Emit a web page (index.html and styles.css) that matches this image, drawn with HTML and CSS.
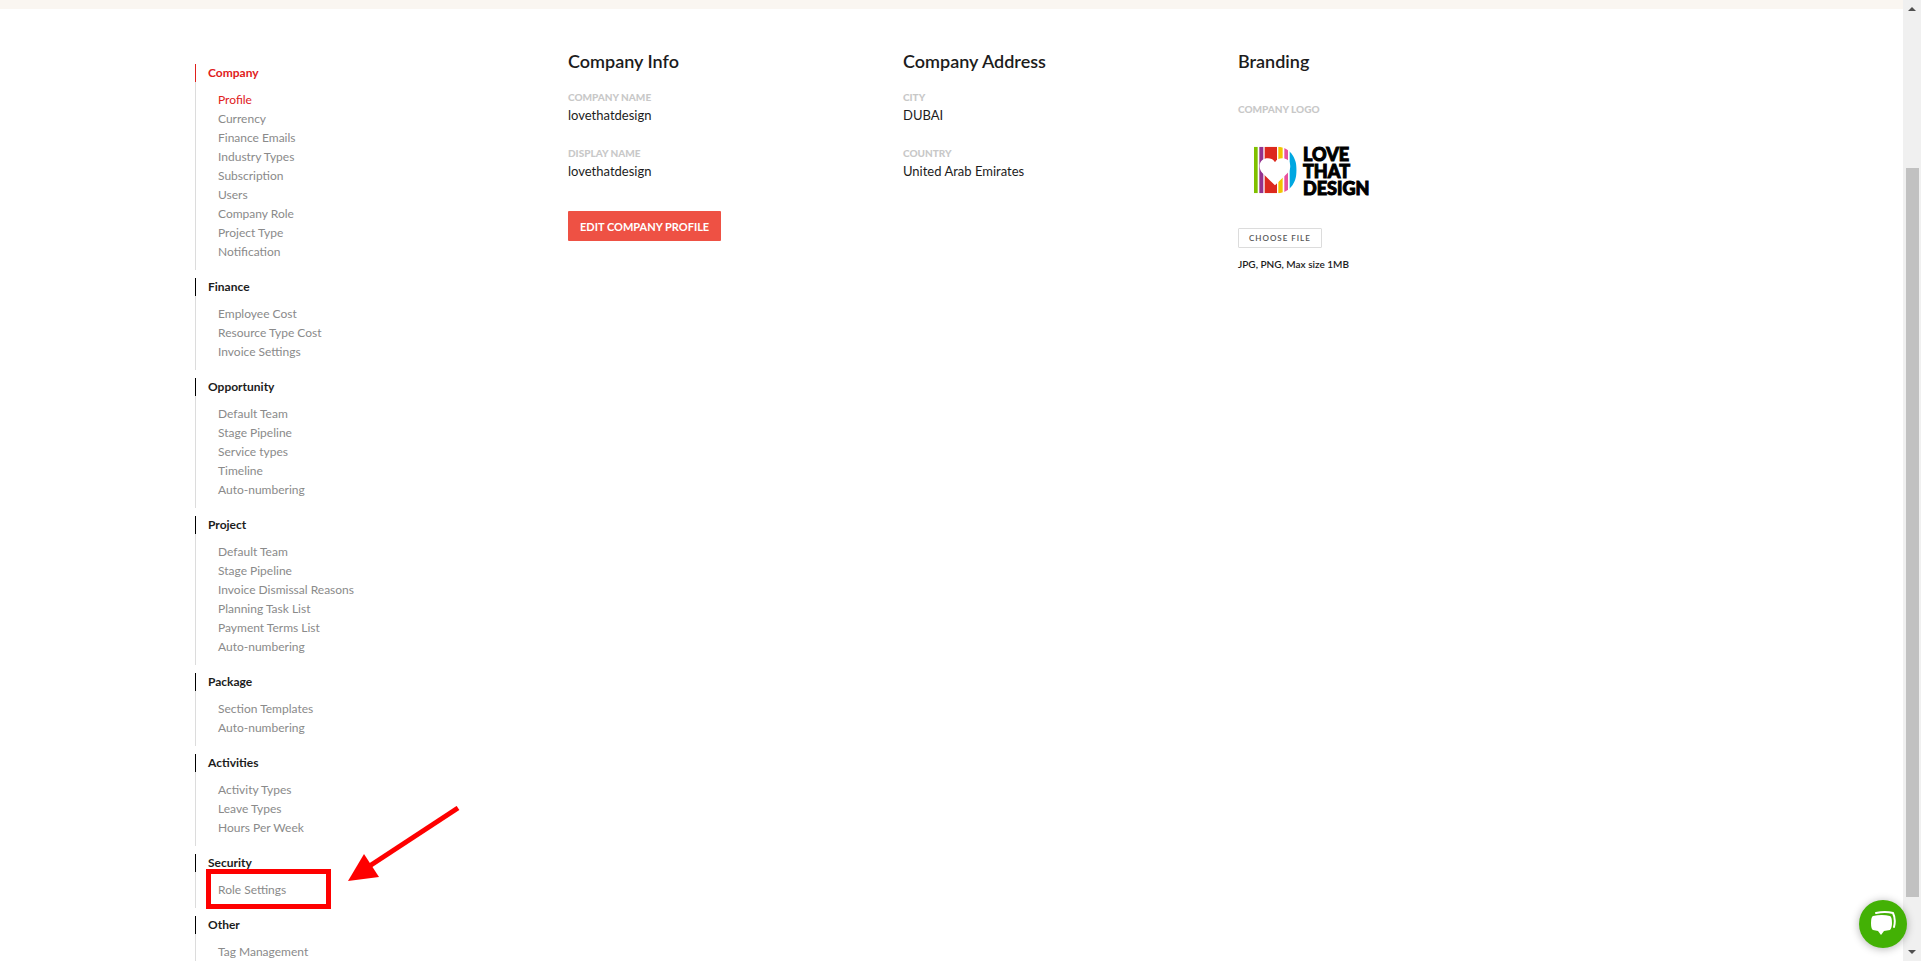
FILE: index.html
```html
<!DOCTYPE html>
<html lang="en">
<head>
  <meta charset="UTF-8">
  <meta name="viewport" content="width=device-width, initial-scale=1.0">
  <title>Company Profile - Settings</title>
  <link rel="stylesheet" href="styles.css">
</head>
<body>
  <div class="page">
    <div class="top-strip"></div>
    <div class="container">
      <nav class="sidebar">
        <section class="group active">
          <h2>Company</h2>
          <ul>
            <li><a class="current" href="#">Profile</a></li>
            <li><a href="#">Currency</a></li>
            <li><a href="#">Finance Emails</a></li>
            <li><a href="#">Industry Types</a></li>
            <li><a href="#">Subscription</a></li>
            <li><a href="#">Users</a></li>
            <li><a href="#">Company Role</a></li>
            <li><a href="#">Project Type</a></li>
            <li><a href="#">Notification</a></li>
          </ul>
        </section>
        <section class="group">
          <h2>Finance</h2>
          <ul>
            <li><a href="#">Employee Cost</a></li>
            <li><a href="#">Resource Type Cost</a></li>
            <li><a href="#">Invoice Settings</a></li>
          </ul>
        </section>
        <section class="group">
          <h2>Opportunity</h2>
          <ul>
            <li><a href="#">Default Team</a></li>
            <li><a href="#">Stage Pipeline</a></li>
            <li><a href="#">Service types</a></li>
            <li><a href="#">Timeline</a></li>
            <li><a href="#">Auto-numbering</a></li>
          </ul>
        </section>
        <section class="group">
          <h2>Project</h2>
          <ul>
            <li><a href="#">Default Team</a></li>
            <li><a href="#">Stage Pipeline</a></li>
            <li><a href="#">Invoice Dismissal Reasons</a></li>
            <li><a href="#">Planning Task List</a></li>
            <li><a href="#">Payment Terms List</a></li>
            <li><a href="#">Auto-numbering</a></li>
          </ul>
        </section>
        <section class="group">
          <h2>Package</h2>
          <ul>
            <li><a href="#">Section Templates</a></li>
            <li><a href="#">Auto-numbering</a></li>
          </ul>
        </section>
        <section class="group">
          <h2>Activities</h2>
          <ul>
            <li><a href="#">Activity Types</a></li>
            <li><a href="#">Leave Types</a></li>
            <li><a href="#">Hours Per Week</a></li>
          </ul>
        </section>
        <section class="group">
          <h2>Security</h2>
          <ul>
            <li class="marked">
              <a href="#">Role Settings</a>
              <span class="mark-box"></span>
              <svg class="mark-arrow" width="112" height="76" viewBox="0 0 112 76">
                <path d="M110 2 L20 61" stroke="#fe0000" stroke-width="5" fill="none"/>
                <path d="M0 75 L16 48 L31 71 Z" fill="#fe0000"/>
              </svg>
            </li>
          </ul>
        </section>
        <section class="group">
          <h2>Other</h2>
          <ul>
            <li><a href="#">Tag Management</a></li>
          </ul>
        </section>
      </nav>

      <main class="content">
        <section class="column">
          <h1>Company Info</h1>
          <dl>
            <dt>COMPANY NAME</dt>
            <dd>lovethatdesign</dd>
            <dt>DISPLAY NAME</dt>
            <dd>lovethatdesign</dd>
          </dl>
          <button class="btn-edit" type="button">EDIT COMPANY PROFILE</button>
        </section>
        <section class="column">
          <h1>Company Address</h1>
          <dl>
            <dt>CITY</dt>
            <dd>DUBAI</dd>
            <dt>COUNTRY</dt>
            <dd>United Arab Emirates</dd>
          </dl>
        </section>
        <section class="column">
          <h1>Branding</h1>
          <p class="logo-label">COMPANY LOGO</p>
          <div class="logo">
            <svg width="44" height="48" viewBox="0 0 132 144">
              <defs>
                <clipPath id="d-shape">
                  <path d="M0 2 H68 C106 2 128 33 128 72 C128 111 106 142 68 142 H0 Z"/>
                </clipPath>
              </defs>
              <g clip-path="url(#d-shape)">
                <rect x="0" y="0" width="11" height="144" fill="#80c000"/>
                <rect x="16" y="0" width="12" height="144" fill="#93328e"/>
                <rect x="32" y="0" width="37" height="144" fill="#dc291e"/>
                <rect x="73" y="0" width="13" height="144" fill="#f2c500"/>
                <rect x="91" y="0" width="11" height="144" fill="#e8509e"/>
                <rect x="107" y="0" width="25" height="144" fill="#00a7e1"/>
              </g>
              <path d="M63 49 C57 35 36 33 25 42 C13 52 15 71 26 82 L63 118 L100 82 C111 71 112 52 101 42 C90 33 69 35 63 49 Z" fill="#fff"/>
            </svg>
            <div class="logo-text">LOVE<br>THAT<br>DESIGN</div>
          </div>
          <button class="btn-file" type="button">CHOOSE FILE</button>
          <p class="hint">JPG, PNG, Max size 1MB</p>
        </section>
      </main>
    </div>
  </div>

  <div class="scrollbar">
    <span class="arrow-up"></span>
    <span class="track"><span class="thumb"></span></span>
    <span class="arrow-down"></span>
  </div>

  <button class="chat" type="button" aria-label="Chat">
    <svg width="26" height="26" viewBox="0 0 26 26">
      <path d="M6 2 Q15 0 23 2 Q26 8 24 16" stroke="#fff" stroke-width="2" fill="none" stroke-linecap="round"/>
      <path d="M3 5 Q12 3 20 5 Q22 6 22 12 Q22 17 20 19 L14 20 L11 24 L8 20 L3 19 Q1 18 1 12 Q1 6 3 5 Z" fill="#fff"/>
    </svg>
  </button>
</body>
</html>
```

FILE: styles.css
```css
* {
  box-sizing: border-box;
}
body {
  margin: 0;
  font-family: Lato, "Liberation Sans", sans-serif;
  background: #fff;
  color: #1c1c1c;
  height: 100vh;
  overflow: hidden;
  display: flex;
}
h1, h2, p, ul, dl, dd {
  margin: 0;
  padding: 0;
}
button {
  font-family: inherit;
  cursor: pointer;
}
.page {
  flex: 1;
  min-width: 0;
  overflow: hidden;
}
.top-strip {
  height: 9px;
  background: #faf6f1;
}
.container {
  display: flex;
  padding: 0 0 0 195px;
}

/* settings menu */
.sidebar {
  width: 373px;
  flex-shrink: 0;
  padding-top: 55px;
}
.group {
  margin-bottom: 8px;
  border-left: 1px solid #dcdcdc;
}
.group h2 {
  margin-left: -1px;
  padding-left: 12px;
  border-left: 1px solid #000;
  font-size: 12px;
  line-height: 18px;
  font-weight: 700;
}
.group.active h2 {
  border-color: #e0201b;
  color: #e0201b;
}
.group ul {
  list-style: none;
  padding: 8px 0 9px 22px;
}
.group li {
  font-size: 12px;
  line-height: 19px;
}
.group a {
  color: #8a8a8a;
  text-decoration: none;
}
.group a.current {
  color: #e0201b;
}
.marked {
  position: relative;
}
.mark-box {
  position: absolute;
  left: -12px;
  top: -11px;
  width: 125px;
  height: 40px;
  border: 5px solid #fe0000;
}
.mark-arrow {
  position: absolute;
  left: 130px;
  top: -74px;
}

/* company details */
.content {
  flex: 1;
  display: grid;
  grid-template-columns: repeat(3, minmax(0, 335px));
  padding-top: 40px;
}
.column h1 {
  font-size: 18px;
  line-height: 24px;
  font-weight: 600;
  margin-bottom: 16px;
}
dt, .logo-label {
  font-size: 10px;
  line-height: 16px;
  font-weight: 900;
  color: #c8c8c8;
}
dd {
  font-size: 13px;
  line-height: 20px;
  margin-bottom: 20px;
}
.btn-edit {
  margin-top: 10px;
  height: 30px;
  padding: 0 12px;
  border: 0;
  border-radius: 1px;
  background: #ee5144;
  color: #fff;
  font-size: 11px;
  font-weight: 700;
}
.logo-label {
  margin-top: 28px;
}
.logo {
  display: flex;
  gap: 5px;
  margin: 29px 0 31px 16px;
}
.logo-text {
  font-size: 18px;
  line-height: 17px;
  font-weight: 900;
  color: #000;
  -webkit-text-stroke: 1px #000;
}
.btn-file {
  display: block;
  height: 20px;
  padding: 0 10px;
  border: 1px solid #dcdcdc;
  border-radius: 1px;
  background: #fff;
  color: #555;
  font-size: 8px;
  font-weight: 600;
  letter-spacing: 1px;
}
.hint {
  margin-top: 8px;
  font-size: 10px;
  line-height: 16px;
  font-weight: 600;
}

/* window scrollbar */
.scrollbar {
  width: 18px;
  background: #f0f0f0;
  display: flex;
  flex-direction: column;
  align-items: center;
  padding: 7px 0 2px;
}
.arrow-up, .arrow-down {
  border: 4px solid transparent;
}
.arrow-up {
  border-top: 0;
  border-bottom-color: #505050;
}
.arrow-down {
  border-bottom: 0;
  border-top-color: #505050;
  margin-bottom: 5px;
}
.track {
  flex: 1;
  width: 13px;
  padding: 157px 0 53px;
}
.thumb {
  display: block;
  height: 100%;
  background: #c1c1c1;
}

.chat {
  position: fixed;
  right: 14px;
  bottom: 13px;
  width: 48px;
  height: 48px;
  padding: 0;
  border: 0;
  border-radius: 50%;
  background: #43b105;
  box-shadow: 0 1px 8px rgba(0, 0, 0, 0.3);
  display: flex;
  align-items: center;
  justify-content: center;
}
```
